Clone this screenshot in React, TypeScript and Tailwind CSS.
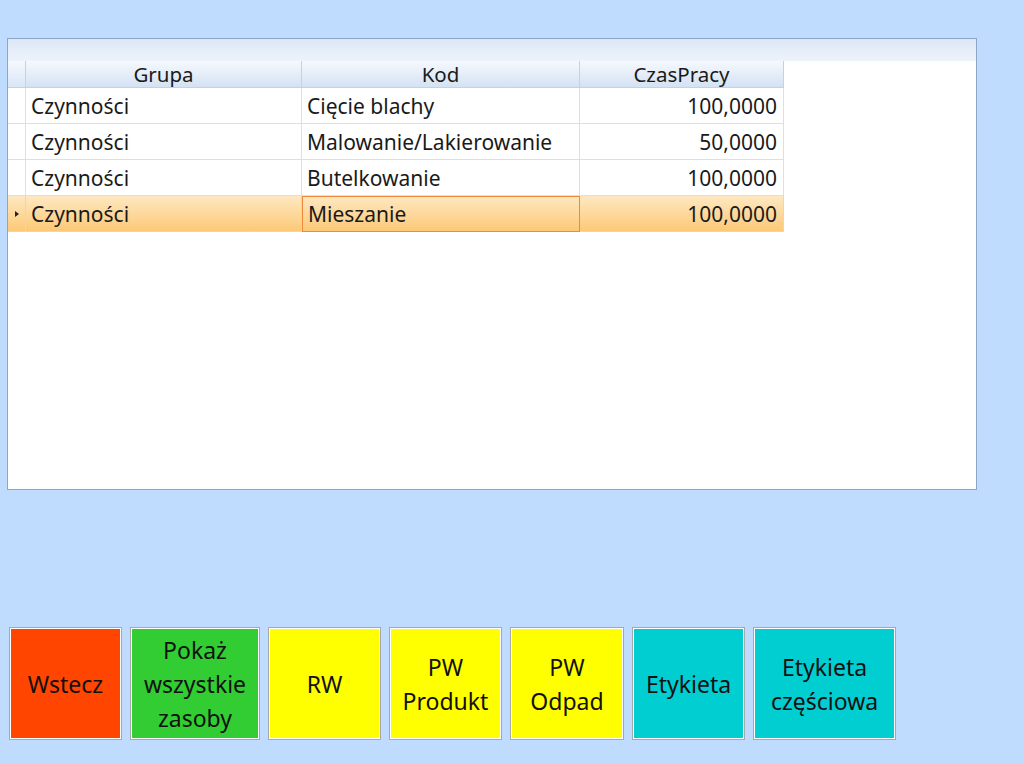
import React from "react";

type Row = { grupa: string; kod: string; czas: string };

const rows: Row[] = [
  { grupa: "Czynności", kod: "Cięcie blachy", czas: "100,0000" },
  { grupa: "Czynności", kod: "Malowanie/Lakierowanie", czas: "50,0000" },
  { grupa: "Czynności", kod: "Butelkowanie", czas: "100,0000" },
  { grupa: "Czynności", kod: "Mieszanie", czas: "100,0000" },
];

const buttons = [
  { label: ["Wstecz"], bg: "bg-[#ff4500]", w: "w-[113px]" },
  { label: ["Pokaż", "wszystkie", "zasoby"], bg: "bg-[#32cd32]", w: "w-[130px]" },
  { label: ["RW"], bg: "bg-[#ffff00]", w: "w-[113px]" },
  { label: ["PW", "Produkt"], bg: "bg-[#ffff00]", w: "w-[113px]" },
  { label: ["PW", "Odpad"], bg: "bg-[#ffff00]", w: "w-[114px]" },
  { label: ["Etykieta"], bg: "bg-[#00ced1]", w: "w-[113px]" },
  { label: ["Etykieta", "częściowa"], bg: "bg-[#00ced1]", w: "w-[143px]" },
];

const App: React.FC = () => {
  const selected = 3;

  return (
    <main className="w-[1024px] h-[764px] bg-[#bfdbfe] flex flex-col text-[#1a1a1a] font-['Noto_Sans','Open_Sans',sans-serif] overflow-hidden">
      <div id="Grid" className="mt-[38px] ml-[7px] w-[970px] h-[452px] border border-[#8da6c4] bg-white flex flex-col">
        <div className="h-[22px] bg-gradient-to-b from-[#dce7f5] to-[#edf3fb]"></div>
        <div className="flex flex-row w-fit h-[27px] text-[20.5px] leading-[26px]">
          <div className="w-[18px] border-r border-b border-[#c3d3e7] bg-gradient-to-b from-[#f6f9fd] to-[#d9e6f6]"></div>
          <div className="w-[276px] text-center border-r border-b border-[#c3d3e7] bg-gradient-to-b from-[#f6f9fd] to-[#d4e2f4]">Grupa</div>
          <div className="w-[278px] text-center border-r border-b border-[#c3d3e7] bg-gradient-to-b from-[#f6f9fd] to-[#d4e2f4]">Kod</div>
          <div className="w-[204px] text-center border-r border-b border-[#c3d3e7] bg-gradient-to-b from-[#f6f9fd] to-[#d4e2f4]">CzasPracy</div>
        </div>
        {rows.map((row, i) => {
          const isSel = i === selected;
          return (
            <div key={i} className={`flex flex-row w-fit h-[36px] text-[21px] leading-[36px] ${isSel ? "bg-gradient-to-b from-[#fee8c0] to-[#fcc874]" : ""}`}>
              <div className={`w-[18px] border-r border-b flex items-center justify-center ${isSel ? "border-[#f6d49a]" : "border-[#d5e1ef]"}`}>
                {isSel && (
                  <svg width="6" height="8" viewBox="0 0 6 8">
                    <path d="M1 1 L5 4 L1 7 Z" fill="#222" />
                  </svg>
                )}
              </div>
              <div className={`w-[276px] pl-[5px] border-r border-b ${isSel ? "border-[#f6d49a]" : "border-[#d5e1ef]"}`}>{row.grupa}</div>
              <div className={`w-[278px] pl-[5px] border-r border-b ${isSel ? "border border-[#f08a3a] leading-[34px]" : "border-[#d5e1ef]"}`}>{row.kod}</div>
              <div className={`w-[204px] pr-[6px] text-right border-r border-b ${isSel ? "border-[#f6d49a]" : "border-[#d5e1ef]"}`}>{row.czas}</div>
            </div>
          );
        })}
      </div>
      <div id="Buttons" className="mt-[137px] ml-[9px] flex flex-row gap-x-[8px]">
        {buttons.map((b, i) => (
          <div key={i} className={`${b.w} h-[113px] border border-[#a8a8a8] p-px bg-white`}>
            <div className={`w-full h-full ${b.bg} flex flex-col items-center justify-center text-[23px] leading-[34px] text-[#111] text-center`}>
              {b.label.map((l, j) => (
                <span key={j}>{l}</span>
              ))}
            </div>
          </div>
        ))}
      </div>
    </main>
  );
};

export default App;
